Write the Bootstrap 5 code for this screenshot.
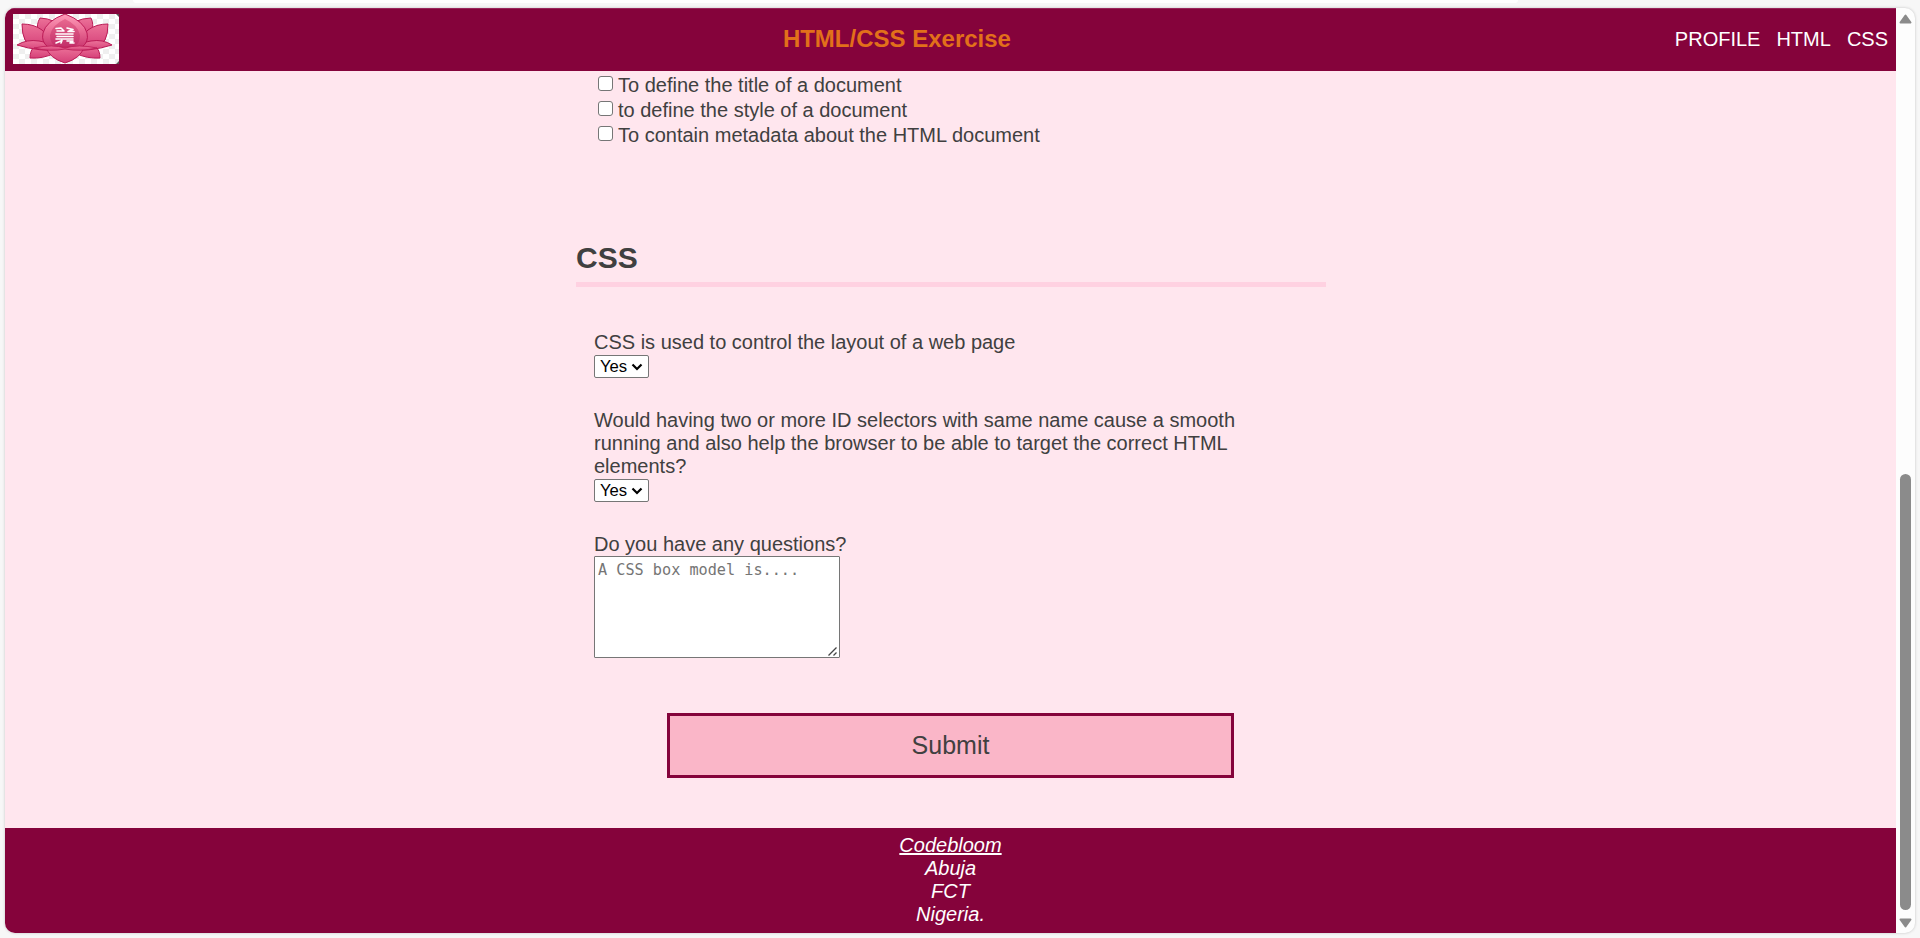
<!DOCTYPE html>
<html lang="en">
<head>
<meta charset="utf-8">
<title>HTML/CSS Exercise</title>
<link href="https://cdn.jsdelivr.net/npm/bootstrap@5.3.0/dist/css/bootstrap.min.css" rel="stylesheet">
<style>
html,body{height:100%}
body{background:#f7f7f7;color:#404040;font:20px/23px "Liberation Sans",Arial,sans-serif;padding:8px 5px 5px;position:relative}
.tab-edge{left:133px;top:0;width:1385px;height:3px;background:#fff;border-radius:0 0 8px 8px}
.frame{height:925px;border-radius:10px;background:#fdfdfd;box-shadow:0 0 3px rgba(0,0,0,.22)}
.page{background:#ffe6ee}
.topbar{height:63px;background:#85033b;padding:0 8px 2px;border-top:1px solid #98245a}
.topbar h1{font-size:24px;line-height:28px;color:#e2701a;margin:0}
.topbar a{color:#fff}
.navgap{gap:16px}
.logo{width:106px;height:50px;display:block}
.quiz{width:750px;margin-left:571px}
.answers{padding:3px 0 0 22px}
.answers label{height:25px;gap:5px}
.tick{appearance:none;width:15px;height:15px;border:1px solid #767676;border-radius:3px;background:#fff;margin:2px 0 0}
.quiz h2{font-size:30px;line-height:34px;margin:92px 0 7px}
.rule{height:5px;background:#ffd1e1}
.questions{padding:44px 40px 0 18px}
.pick{width:55px;height:23px;border:1px solid #767676;border-radius:2px;background:#fff;color:#000;font-size:16.67px;line-height:20px;padding:0 5px;margin-top:1px}
.next-q{margin-top:31px}
.note-box{width:246px}
.note{display:block;width:246px;height:102px;border:1px solid #767676;border-radius:1px;padding:4px 3px;font:15.2px/19px "DejaVu Sans Mono",monospace;background:#fff;resize:none}
.note::placeholder{color:#757575}
.grip{right:3px;bottom:2px}
.send{width:567px;height:65px;margin:55px 0 0 91px;border:3px solid #85033b;background:#fab6c8;color:#404040;font-size:25px}
.foot{height:105px;background:#85033b;color:#fff;padding-top:6px;font-style:italic}
.foot a{color:#fff;text-decoration-thickness:2px}
.scroller{width:19px;padding:6px 0 5px}
.thumb{width:11px;height:436px;border-radius:6px;background:#8b8b8b}
</style>
</head>
<body>
<div class="tab-edge position-absolute"></div>
<div class="frame d-flex overflow-hidden">
  <div class="page flex-grow-1 d-flex flex-column">
    <header class="topbar d-flex align-items-center justify-content-between">
      <svg class="logo" viewBox="0 0 106 50">
        <defs>
          <pattern id="chk" width="12" height="10" patternUnits="userSpaceOnUse"><path fill="#fff" d="M0 0h12v10H0z"/><path fill="#efefef" d="M0 0h6v5H0zM6 5h6v5H6z"/></pattern>
          <linearGradient id="petal" x2="0" y2="1"><stop stop-color="#ec7299"/><stop offset="1" stop-color="#d54078"/></linearGradient>
          <linearGradient id="core" x2="0" y2="1"><stop stop-color="#ff9dba"/><stop offset=".5" stop-color="#ea6c95"/><stop offset="1" stop-color="#cb3770"/></linearGradient>
          <linearGradient id="heart" x2="0" y2="1"><stop stop-color="#e8688f"/><stop offset="1" stop-color="#c4306a"/></linearGradient>
        </defs>
        <rect width="106" height="50" fill="url(#chk)"/>
        <path d="M103 0h3v3zM106 47v3h-3z" fill="#555"/>
        <g fill="url(#petal)" stroke="#bb1b56" stroke-width="1">
          <path d="M43 8Q34 4 27 4Q23 10 25 19L38 24ZM61 8Q70 4 78 4Q81 10 79 19L65 24Z"/>
          <path d="M9 10Q21 10 29 16Q36 22 41 33Q19 35 12 26Q9 20 9 10ZM95 10Q83 10 75 16Q68 22 63 33Q85 35 92 26Q95 20 95 10Z"/>
          <path d="M17 44Q17 36 22 32H42V39Q30 45 17 44ZM87 44Q87 36 82 32H62V39Q74 45 87 44Z"/>
          <path d="M4 31Q14 25 26 27Q40 29 52 34Q64 29 78 27Q90 25 99 31Q77 38 52 36Q26 38 4 31Z"/>
          <path d="M33 33Q36 44 52 49Q68 44 71 33Z"/>
          <path fill="url(#core)" d="M52 0Q71 7 74 19Q76 28 69 33H35Q28 28 30 19Q33 7 52 0Z"/>
        </g>
        <path fill="url(#heart)" d="M52 5Q65 11 67 21Q67 29 62 32H42Q37 29 37 21Q39 11 52 5Z"/>
        <path fill="url(#petal)" stroke="#bb1b56" stroke-width=".8" d="M21 34Q40 30 52 34Q65 30 84 34Q67 38 52 35Q37 38 21 34Z"/>
        <g fill="none" stroke="#fff" stroke-width="1.600" stroke-linecap="round" stroke-linejoin="round"><path d="M43 14.500L48 14L51 17H44M54 14L60 15.500L55 17.500H61M43 20H60M44 22.500H60M43 25H60M43 29L49 26.500L48 29M54 27H60L57 29H61"/></g>
      </svg>
      <h1 class="fw-bold">HTML/CSS Exercise</h1>
      <nav class="d-flex navgap"><a class="text-decoration-none" href="#profile">PROFILE</a><a class="text-decoration-none" href="#html">HTML</a><a class="text-decoration-none" href="#css">CSS</a></nav>
    </header>
    <main class="quiz flex-grow-1">
      <div class="answers d-flex flex-column">
        <label class="d-flex align-items-start"><input class="tick" type="checkbox">To define the title of a document</label>
        <label class="d-flex align-items-start"><input class="tick" type="checkbox">to define the style of a document</label>
        <label class="d-flex align-items-start"><input class="tick" type="checkbox">To contain metadata about the HTML document</label>
      </div>
      <h2 class="fw-bold">CSS</h2>
      <div class="rule"></div>
      <div class="questions">
        <div>CSS is used to control the layout of a web page</div>
        <div class="pick d-flex align-items-center justify-content-between"><span>Yes</span><svg width="12" height="8" viewBox="0 0 12 8"><path d="M1.500 1.500L6 6l4.500-4.500" fill="none" stroke="#000" stroke-width="2.200"/></svg></div>
        <div class="next-q">Would having two or more ID selectors with same name cause a smooth running and also help the browser to be able to target the correct HTML elements?</div>
        <div class="pick d-flex align-items-center justify-content-between"><span>Yes</span><svg width="12" height="8" viewBox="0 0 12 8"><path d="M1.500 1.500L6 6l4.500-4.500" fill="none" stroke="#000" stroke-width="2.200"/></svg></div>
        <label class="next-q d-block" for="note">Do you have any questions?</label>
        <div class="note-box position-relative">
          <textarea class="note" id="note" placeholder="A CSS box model is...."></textarea>
          <svg class="grip position-absolute" width="9" height="9" viewBox="0 0 9 9"><path d="M.5 8.500L8.500 .5M5.500 8.500l3-3" stroke="#444" stroke-width="1.300"/></svg>
        </div>
      </div>
      <button class="send d-block" type="submit">Submit</button>
    </main>
    <footer class="foot text-center"><a href="#home">Codebloom</a><br>Abuja<br>FCT<br>Nigeria.</footer>
  </div>
  <div class="scroller d-flex flex-column align-items-center justify-content-between">
    <svg width="13" height="10" viewBox="0 0 13 10"><path d="M6.500 1.500L11.500 8.500H1.500Z" fill="#8b8b8b" stroke="#8b8b8b" stroke-width="2" stroke-linejoin="round"/></svg>
    <div class="d-flex flex-column align-items-center gap-2"><div class="thumb"></div><svg width="13" height="10" viewBox="0 0 13 10"><path d="M6.500 8.500L11.500 1.500H1.500Z" fill="#8b8b8b" stroke="#8b8b8b" stroke-width="2" stroke-linejoin="round"/></svg></div>
  </div>
</div>
<script src="https://cdn.jsdelivr.net/npm/bootstrap@5.3.0/dist/js/bootstrap.bundle.min.js"></script>
</body>
</html>
